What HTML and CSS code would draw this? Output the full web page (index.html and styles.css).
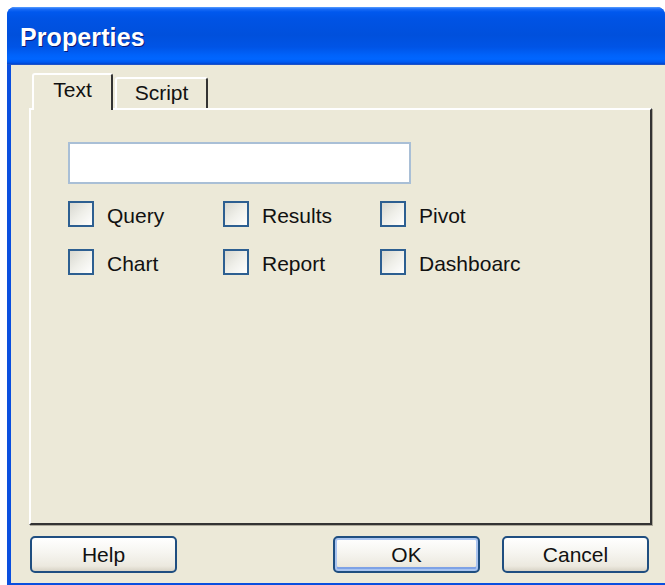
FILE: index.html
```
<!DOCTYPE html>
<html>
<head>
<meta charset="utf-8">
<title>Properties</title>
<link rel="stylesheet" href="styles.css">
</head>
<body>
<div class="window">
  <div class="titlebar"><span class="title">Properties</span></div>
  <div class="client">
    <div class="tabs">
      <div class="tab active">Text</div>
      <div class="tab">Script</div>
    </div>
    <div class="panel">
      <input class="field" type="text">
      <div class="checks">
        <label class="check"><span class="box"></span><span class="lbl">Query</span></label>
        <label class="check"><span class="box"></span><span class="lbl">Results</span></label>
        <label class="check"><span class="box"></span><span class="lbl">Pivot</span></label>
        <label class="check"><span class="box"></span><span class="lbl">Chart</span></label>
        <label class="check"><span class="box"></span><span class="lbl">Report</span></label>
        <label class="check"><span class="box"></span><span class="lbl">Dashboarc</span></label>
      </div>
    </div>
    <div class="buttons">
      <button class="btn">Help</button>
      <div class="btn-group">
        <button class="btn default">OK</button>
        <button class="btn">Cancel</button>
      </div>
    </div>
  </div>
</div>
</body>
</html>
```
FILE: styles.css
```
html, body {
  margin: 0;
  padding: 0;
  background: #ffffff;
  overflow: hidden;
  width: 665px;
  height: 585px;
}

/* dialog frame: the right edge runs off the visible area */
.window {
  margin: 7px 0 0 7px;
  width: 658px;
  height: 578px;
  box-sizing: border-box;
  border-radius: 8px 8px 0 0;
  padding: 0 0 2px 4px;
  background: #0a4fdf;
  display: flex;
  flex-direction: column;
  font-family: "Liberation Sans", Arial, sans-serif;
}

.titlebar {
  flex: none;
  height: 58px;
  margin: 0 0 0 -4px;
  padding: 3px 0 0 13px;
  box-sizing: border-box;
  border-radius: 8px 8px 0 0;
  display: flex;
  align-items: center;
  background: linear-gradient(to bottom,
    #5aa0ff 0px, #1a6cf6 2px, #0058ee 5px, #0053e4 12px,
    #0050dc 28px, #0054e6 40px, #0062fa 48px, #0066ff 52px,
    #005af2 55px, #0046d0 57px, #3a5fc0 58px);
}

.title {
  color: #ffffff;
  font-size: 25px;
  font-weight: bold;
  letter-spacing: 0.1px;
  text-shadow: 1px 1px 0 #0a1a78;
}

.client {
  flex: 1;
  background: #ece9d8;
  padding: 8px 0 0 18px;
  display: flex;
  flex-direction: column;
}

.tabs {
  height: 35px;
  display: flex;
  align-items: flex-end;
  padding-left: 3px;
  position: relative;
  z-index: 1;
}

.tab {
  box-sizing: border-box;
  height: 31px;
  background: #ece9d8;
  border-top: 2px solid #ffffff;
  border-left: 2px solid #ffffff;
  border-right: 2px solid #333333;
  border-radius: 3px 3px 0 0;
  font-size: 21px;
  color: #111111;
  display: flex;
  align-items: center;
  justify-content: center;
  width: 93px;
  padding-bottom: 2px;
}

.tab.active {
  height: 37px;
  width: 81px;
  margin-bottom: -2px;
  margin-right: 2px;
  padding-bottom: 5px;
}

.panel {
  box-sizing: border-box;
  width: 623px;
  height: 417px;
  border-top: 2px solid #ffffff;
  border-left: 2px solid #ffffff;
  border-right: 2px solid #333333;
  border-bottom: 2px solid #333333;
  box-shadow: 1px 1px 0 #aca899;
  padding: 32px 0 0 37px;
}

.field {
  display: block;
  box-sizing: border-box;
  width: 343px;
  height: 42px;
  margin: 0;
  border: 2px solid #a9bfd6;
  background: #ffffff;
  outline: none;
}

.checks {
  display: grid;
  grid-template-columns: 155px 157px 160px;
  row-gap: 22px;
  margin-top: 17px;
}

.check {
  display: flex;
  align-items: center;
  gap: 13px;
  height: 26px;
}

.box {
  box-sizing: border-box;
  width: 26px;
  height: 26px;
  border: 2px solid #2d5f91;
  background: linear-gradient(135deg, #d8d8d0 0%, #efefe9 50%, #ffffff 100%);
}

.lbl {
  font-size: 21px;
  color: #111111;
  padding-top: 3px;
}

.buttons {
  width: 623px;
  margin-top: 11px;
  padding: 0 3px 0 1px;
  box-sizing: border-box;
  display: flex;
  justify-content: space-between;
}

.btn-group {
  display: flex;
  gap: 22px;
}

.btn {
  box-sizing: border-box;
  width: 147px;
  height: 37px;
  border: 2px solid #1f4e80;
  border-radius: 5px;
  background: linear-gradient(to bottom, #ffffff 0%, #f6f5f0 45%, #ece9df 85%, #d8d3c6 100%);
  font-family: "Liberation Sans", Arial, sans-serif;
  font-size: 21px;
  color: #111111;
  padding: 0;
}

.btn.default {
  box-shadow: inset 0 0 0 2px #a9c4f0, inset 0 -2px 0 2px #7ea2e6;
}
```
